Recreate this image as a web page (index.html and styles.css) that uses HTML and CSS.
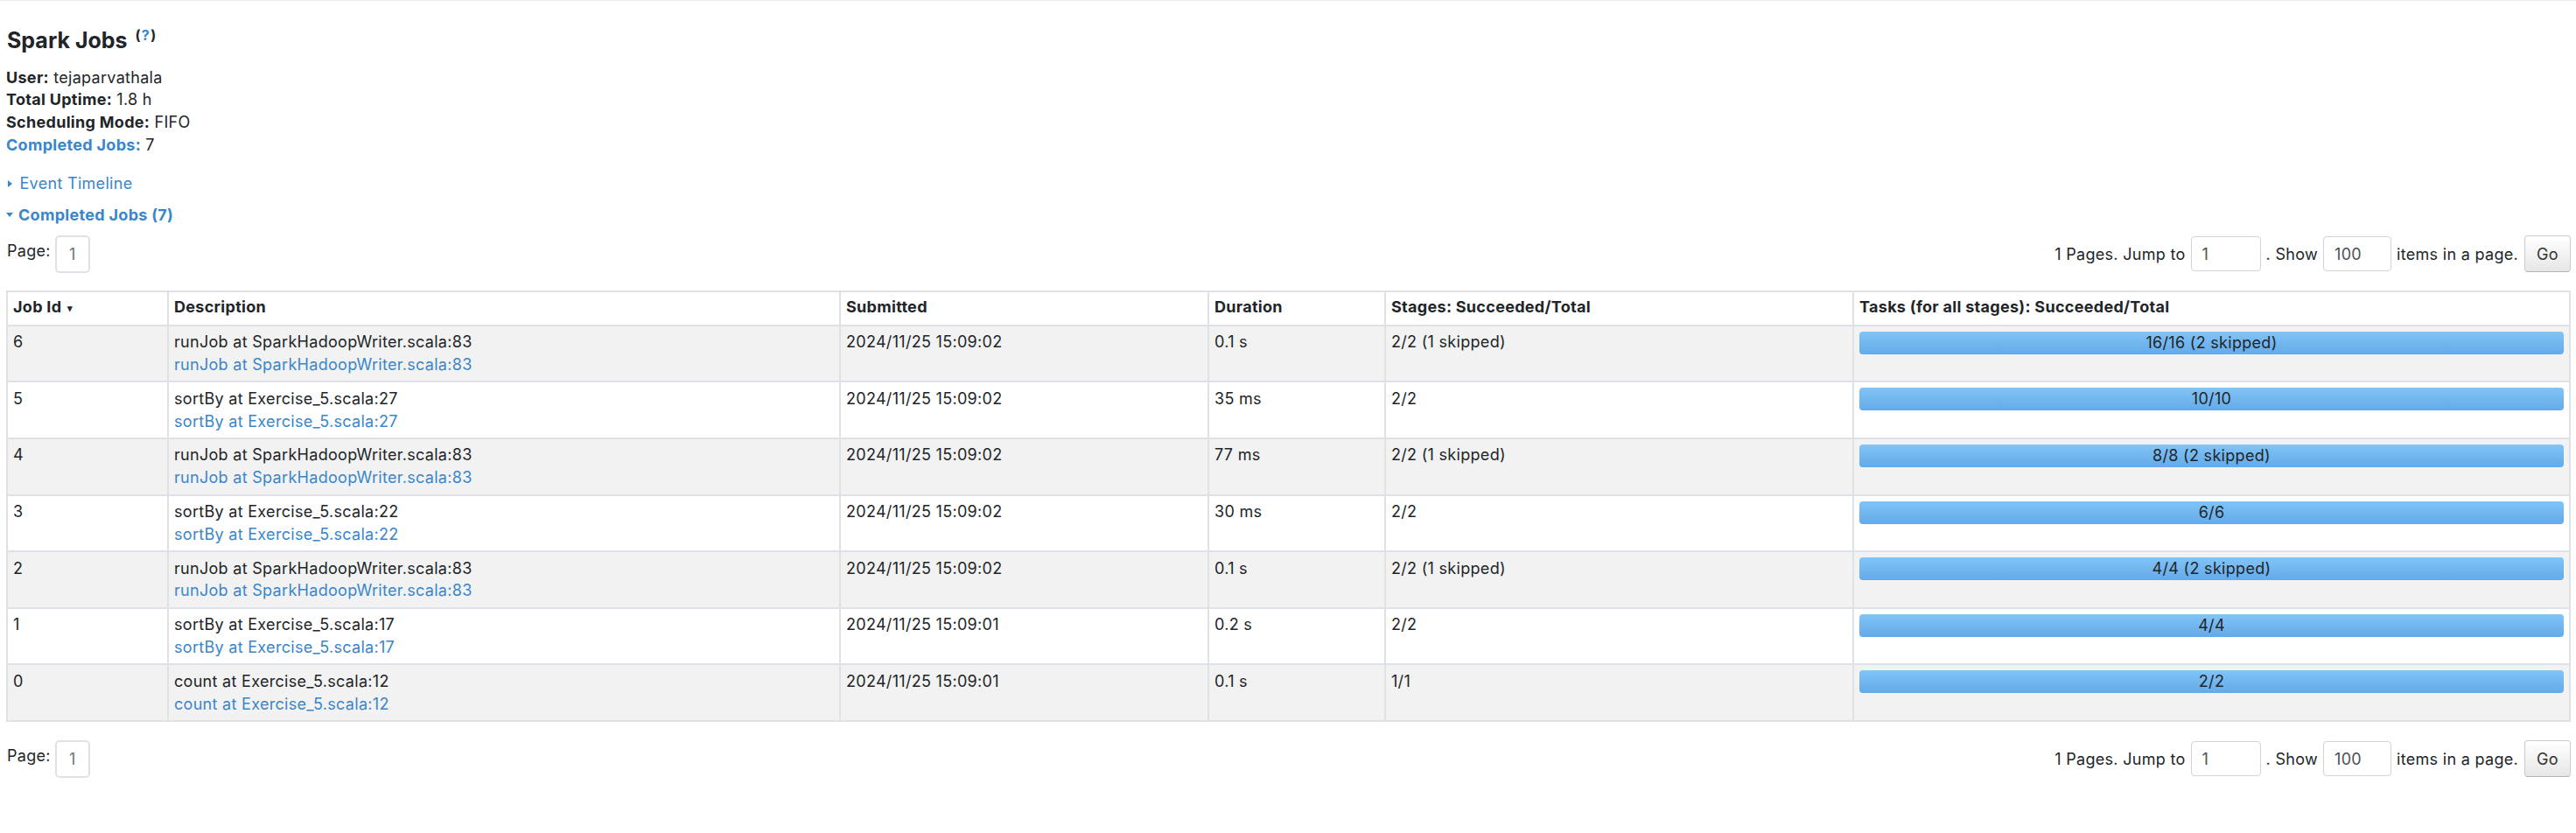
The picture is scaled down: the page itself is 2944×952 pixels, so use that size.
FILE: index.html
```html
<!DOCTYPE html>
<html lang="en">
<head>
<meta charset="utf-8">
<title>Spark Jobs</title>
<link rel="stylesheet" href="styles.css">
</head>
<body>
<div class="page">
  <h3 class="title">Spark Jobs <sup class="help">(<a class="help-link">?</a>)</sup></h3>

  <ul class="summary">
    <li><strong>User:</strong> tejaparvathala</li>
    <li><strong>Total Uptime:</strong> 1.8 h</li>
    <li><strong>Scheduling Mode:</strong> FIFO</li>
    <li><a class="link"><strong>Completed Jobs:</strong></a> 7</li>
  </ul>

  <div class="toggle toggle-timeline">
    <span class="arrow-closed"></span>
    <a class="link">Event Timeline</a>
  </div>
  <div class="toggle toggle-jobs">
    <span class="arrow-open"></span>
    <a class="link"><strong>Completed Jobs (7)</strong></a>
  </div>

  <div class="pager">
    <div class="pager-left">
      <span class="pager-label">Page:</span>
      <span class="page-box">1</span>
    </div>
    <div class="pager-right">
      <span>1 Pages. Jump to</span>
      <input class="field field-page" type="text" value="1">
      <span>. Show</span>
      <input class="field field-size" type="text" value="100">
      <span>items in a page.</span>
      <button class="go-btn" type="button">Go</button>
    </div>
  </div>

  <table class="jobs">
    <colgroup>
      <col class="c-id">
      <col class="c-desc">
      <col class="c-sub">
      <col class="c-dur">
      <col class="c-stages">
      <col class="c-tasks">
    </colgroup>
    <thead>
      <tr>
        <th>Job Id <span class="sort">&#x25BE;</span></th>
        <th>Description</th>
        <th>Submitted</th>
        <th>Duration</th>
        <th>Stages: Succeeded/Total</th>
        <th>Tasks (for all stages): Succeeded/Total</th>
      </tr>
    </thead>
    <tbody>
      <tr>
        <td>6</td>
        <td>runJob at SparkHadoopWriter.scala:83<br><a class="link">runJob at SparkHadoopWriter.scala:83</a></td>
        <td>2024/11/25 15:09:02</td>
        <td>0.1 s</td>
        <td>2/2 (1 skipped)</td>
        <td><div class="progress"><span class="progress-text">16/16 (2 skipped)</span></div></td>
      </tr>
      <tr>
        <td>5</td>
        <td>sortBy at Exercise_5.scala:27<br><a class="link">sortBy at Exercise_5.scala:27</a></td>
        <td>2024/11/25 15:09:02</td>
        <td>35 ms</td>
        <td>2/2</td>
        <td><div class="progress"><span class="progress-text">10/10</span></div></td>
      </tr>
      <tr>
        <td>4</td>
        <td>runJob at SparkHadoopWriter.scala:83<br><a class="link">runJob at SparkHadoopWriter.scala:83</a></td>
        <td>2024/11/25 15:09:02</td>
        <td>77 ms</td>
        <td>2/2 (1 skipped)</td>
        <td><div class="progress"><span class="progress-text">8/8 (2 skipped)</span></div></td>
      </tr>
      <tr>
        <td>3</td>
        <td>sortBy at Exercise_5.scala:22<br><a class="link">sortBy at Exercise_5.scala:22</a></td>
        <td>2024/11/25 15:09:02</td>
        <td>30 ms</td>
        <td>2/2</td>
        <td><div class="progress"><span class="progress-text">6/6</span></div></td>
      </tr>
      <tr>
        <td>2</td>
        <td>runJob at SparkHadoopWriter.scala:83<br><a class="link">runJob at SparkHadoopWriter.scala:83</a></td>
        <td>2024/11/25 15:09:02</td>
        <td>0.1 s</td>
        <td>2/2 (1 skipped)</td>
        <td><div class="progress"><span class="progress-text">4/4 (2 skipped)</span></div></td>
      </tr>
      <tr>
        <td>1</td>
        <td>sortBy at Exercise_5.scala:17<br><a class="link">sortBy at Exercise_5.scala:17</a></td>
        <td>2024/11/25 15:09:01</td>
        <td>0.2 s</td>
        <td>2/2</td>
        <td><div class="progress"><span class="progress-text">4/4</span></div></td>
      </tr>
      <tr>
        <td>0</td>
        <td>count at Exercise_5.scala:12<br><a class="link">count at Exercise_5.scala:12</a></td>
        <td>2024/11/25 15:09:01</td>
        <td>0.1 s</td>
        <td>1/1</td>
        <td><div class="progress"><span class="progress-text">2/2</span></div></td>
      </tr>
    </tbody>
  </table>

  <div class="pager pager-bottom">
    <div class="pager-left">
      <span class="pager-label">Page:</span>
      <span class="page-box">1</span>
    </div>
    <div class="pager-right">
      <span>1 Pages. Jump to</span>
      <input class="field field-page" type="text" value="1">
      <span>. Show</span>
      <input class="field field-size" type="text" value="100">
      <span>items in a page.</span>
      <button class="go-btn" type="button">Go</button>
    </div>
  </div>
</div>
</body>
</html>
```

FILE: styles.css
```css
html, body {
  margin: 0;
  padding: 0;
  background: #ffffff;
}

body {
  font-family: Inter, "Liberation Sans", Arial, sans-serif;
  font-size: 18px;
  letter-spacing: 0.3px;
  line-height: 25.8px;
  color: #212529;
  border-top: 1px solid #ececec;
}

.page {
  padding: 0 6px 0 7px;
}

.link {
  color: #3a86cb;
  text-decoration: none;
}

.title {
  margin: 0;
  padding: 30px 0 0 1px;
  font-size: 25px;
  letter-spacing: 0;
  line-height: 30px;
  font-weight: 700;
  color: #212529;
}

.help {
  font-size: 16px;
  letter-spacing: 0.3px;
  line-height: 0;
  vertical-align: 9px;
  margin-left: 3px;
  color: #212529;
}

.help-link {
  color: #3a86cb;
  padding: 0 1px;
}

.summary {
  list-style: none;
  margin: 14.7px 0 0;
  padding: 0;
}

.summary strong {
  font-weight: 700;
}

.toggle {
  display: flex;
  align-items: center;
  height: 25.8px;
}

.toggle-timeline {
  margin-top: 18.5px;
}

.toggle-jobs {
  margin-top: 9.5px;
}

.arrow-closed {
  width: 0;
  height: 0;
  margin-left: 2px;
  margin-right: 8.5px;
  border-left: 5px solid #3a86cb;
  border-top: 4.5px solid transparent;
  border-bottom: 4.5px solid transparent;
}

.arrow-open {
  width: 0;
  height: 0;
  margin-right: 6px;
  border-top: 5px solid #3a86cb;
  border-left: 4.5px solid transparent;
  border-right: 4.5px solid transparent;
}

.pager {
  display: flex;
  justify-content: space-between;
  align-items: center;
  height: 43px;
  margin-top: 10.5px;
}

.pager-bottom {
  margin-top: 21px;
}

.pager-left {
  display: flex;
  align-items: flex-start;
  height: 43px;
}

.pager-label {
  margin-top: 4.7px;
  margin-left: 1px;
}

.page-box {
  box-sizing: border-box;
  width: 40px;
  height: 43px;
  margin-left: 5px;
  border: 2px solid #dee2e6;
  border-radius: 5px;
  display: flex;
  align-items: center;
  justify-content: center;
  color: #6c757d;
}

.pager-right {
  display: flex;
  align-items: center;
  gap: 6px;
}

.field {
  box-sizing: border-box;
  height: 40px;
  border: 1.5px solid #ced4da;
  border-radius: 4px;
  padding: 0 12px;
  font-family: inherit;
  font-size: 18px;
  letter-spacing: 0.3px;
  color: #495057;
  background: #fff;
  margin: 0;
}

.field-page {
  width: 80px;
}

.field-size {
  width: 78px;
}

.go-btn {
  box-sizing: border-box;
  height: 42px;
  width: 53px;
  margin: 0 0 0 1px;
  padding: 0;
  border: 1.5px solid #cccccc;
  border-bottom-color: #b3b3b3;
  border-radius: 4px;
  background: linear-gradient(to bottom, #ffffff, #e6e6e6);
  font-family: inherit;
  font-size: 18px;
  letter-spacing: 0.3px;
  color: #333;
}

.jobs {
  width: 100%;
  margin-top: 20px;
  border-collapse: collapse;
  table-layout: fixed;
  border: 2px solid #dee2e6;
}

.c-id { width: 184px; }
.c-desc { width: 768px; }
.c-sub { width: 421px; }
.c-dur { width: 202px; }
.c-stages { width: 535px; }
.c-tasks { width: auto; }

.jobs th,
.jobs td {
  border: 2px solid #dee2e6;
  padding: 5.5px 6px;
  text-align: left;
  vertical-align: top;
}

.jobs th {
  padding-top: 4.5px;
  padding-bottom: 4.5px;
  font-weight: 700;
  background: #ffffff;
}

.sort {
  font-size: 11px;
  vertical-align: 1px;
  margin-left: 2px;
}

.jobs tbody tr:nth-child(odd) td {
  background: #f2f2f2;
}

.jobs tbody tr:nth-child(even) td {
  background: #ffffff;
}

.progress {
  height: 26px;
  margin-top: 0.5px;
  border-radius: 4px;
  background: linear-gradient(to bottom, #80c4f8, #65a9e7);
  display: flex;
  align-items: center;
  justify-content: center;
}

.progress-text {
  line-height: 26px;
  color: #212529;
}
```
